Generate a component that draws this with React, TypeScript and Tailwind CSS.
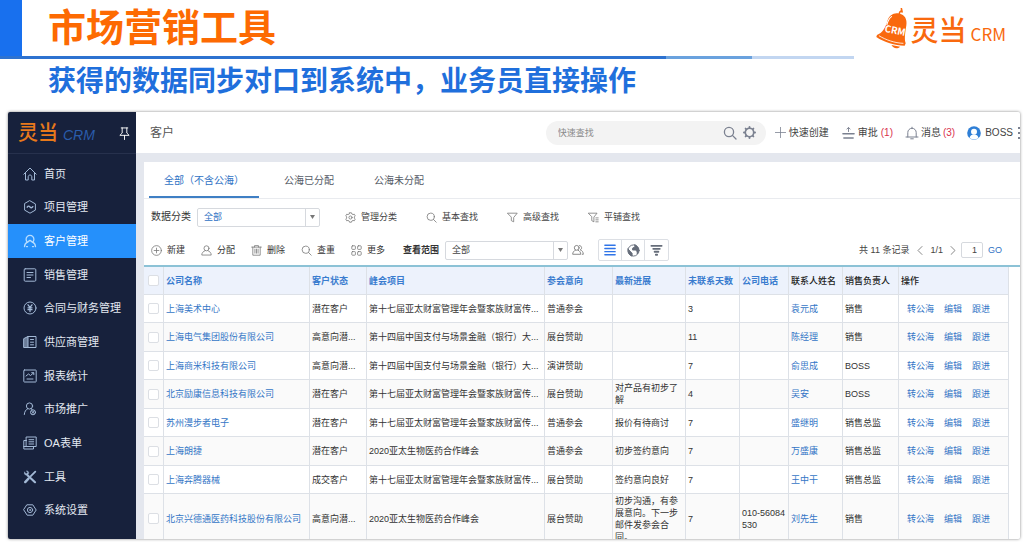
import React from "react";

type IconProps = { className?: string; children: React.ReactNode; box?: string; width?: number };

function Icon({ className = "size-[14px]", children, box = "0 0 14 14", width = 1 }: IconProps) {
  return (
    <svg
      className={`shrink-0 ${className}`}
      viewBox={box}
      fill="none"
      stroke="currentColor"
      strokeWidth={width}
      strokeLinecap="round"
      strokeLinejoin="round"
      aria-hidden="true"
    >
      {children}
    </svg>
  );
}

const hexagon = "M7 .8 12.4 3.9v6.2L7 13.2 1.6 10.1V3.9z";

const searchShape = (
  <>
    <circle cx="6" cy="6" r="4.6" />
    <path d="m9.4 9.4 3.6 3.6" />
  </>
);

const menu: { label: string; icon: React.ReactNode }[] = [
  {
    label: "首页",
    icon: <path d="M.8 7.2 7 1l6.2 6.2M2.500 6v7h2.700V9.800c0-2.400 3.600-2.400 3.600 0V13h2.700V6" />,
  },
  {
    label: "项目管理",
    icon: (
      <>
        <path d={hexagon} />
        <path d="M4.200 7.200c1-1.600 1.900-1.200 2.800-.2s1.800 1.200 2.800-.3" strokeWidth="1.400" />
      </>
    ),
  },
  {
    label: "客户管理",
    icon: (
      <>
        <path d="M4.600 8.400A3.900 3.900 0 1 1 9.400 8.400" strokeWidth="1.300" />
        <path d="M1.500 12.600c.2-2.600 1.300-3.900 3-4.500L7 6.300l2.500 1.800c1.700.6 2.800 1.900 3 4.500M3.500 12.600h1M9.500 12.600h1" strokeWidth="1.300" />
      </>
    ),
  },
  {
    label: "销售管理",
    icon: (
      <>
        <rect x="1.200" y=".8" width="11.600" height="12.400" rx="1" />
        <path d="M4 4.500h6M4 7h6M4 9.500h3.500" />
      </>
    ),
  },
  {
    label: "合同与财务管理",
    icon: (
      <>
        <circle cx="7" cy="7" r="6" />
        <path d="M5 3.800 7 6.400l2-2.600M7 6.400v4.200M5 6.800h4M5 8.700h4" strokeWidth="1.300" />
      </>
    ),
  },
  {
    label: "供应商管理",
    icon: (
      <>
        <path d="M1 3.500 5 1.500v11H1z" fill="currentColor" fillOpacity=".6" />
        <path d="M5 1.500h8v11H5M7.500 4.500h3M7.500 7.200h3M7.500 9.800h3" />
      </>
    ),
  },
  {
    label: "报表统计",
    icon: (
      <>
        <rect x=".8" y="1" width="12.400" height="12" rx=".6" />
        <path d="m3 7 2.500-2 2 1.500L10.500 4M8.700 3.700h2.100v2M4 10h6" />
      </>
    ),
  },
  {
    label: "市场推广",
    icon: (
      <>
        <circle cx="6.500" cy="4" r="3.100" />
        <path d="M4.700 6.700c-2 1-3.200 3-3.400 5.800M8.200 6.600l1.100 1.400" />
        <circle cx="10" cy="10.300" r="2.500" />
        <path d="m8.600 9.200 2.800 2.400M9 11.400l2-2.200" />
      </>
    ),
  },
  {
    label: "OA表单",
    icon: (
      <>
        <path d="M3.500 1h9.700v9.500H3.500zM3.500 4.500H.8V13h9.700v-2.500M.8 10.500h2.700" />
        <path d="M6 3.700h4.700M6 5.800h4.700M6 8h4.700" />
      </>
    ),
  },
  {
    label: "工具",
    icon: (
      <>
        <path d="m4.500 5.200 7.500 7" strokeWidth="2.200" />
        <path
          d="M1.600 2.200 3.200 4 4.800 2.400 3.400 1C5.200.8 6 2.200 5.600 3.600 5.200 5 3.200 5.600 2 4.600 1.300 4 1.200 3 1.600 2.200z"
          fill="currentColor"
          strokeWidth=".5"
        />
        <path d="m12.300 1.700-4.500 4.500" strokeWidth="1.800" />
        <path d="m5.500 8.600-3.300 3.500" strokeWidth="2.400" />
      </>
    ),
  },
  {
    label: "系统设置",
    icon: (
      <>
        <path d="M4.200 1.800h5.600L13.200 7l-3.400 5.200H4.200L.8 7z" />
        <circle cx="7" cy="7" r="2.600" />
        <circle cx="7" cy="7" r=".4" />
      </>
    ),
  },
];

const gearShape = (
  <>
    <path d="M5.800 1h2.400l.5 1.500 1.500.8 1.600-.5 1.200 2.100L11.900 6.200v1.600l1.100 1.300-1.200 2.100-1.600-.5-1.500.8L8.200 13H5.800l-.5-1.500-1.500-.8-1.600.5L1 9.100l1.100-1.300V6.200L1 4.900l1.200-2.100 1.600.5 1.500-.8z" />
    <circle cx="7" cy="7" r="2" />
  </>
);

const finders: { label: string; icon: React.ReactNode }[] = [
  { label: "管理分类", icon: gearShape },
  { label: "基本查找", icon: searchShape },
  { label: "高级查找", icon: <path d="M1 1.500h12L8.500 7v5.500L5.500 11V7z" /> },
  {
    label: "平铺查找",
    icon: <path d="M.8 1.500h10.700L7.500 6.500v6L4.800 11V6.500zM10 7.500h3M10 10h3M10 12.500h3" />,
  },
];

const actions: { label: string; icon: React.ReactNode }[] = [
  {
    label: "新建",
    icon: (
      <>
        <circle cx="7" cy="7" r="6.200" />
        <path d="M7 4v6M4 7h6" />
      </>
    ),
  },
  {
    label: "分配",
    icon: (
      <>
        <circle cx="7" cy="4.200" r="3.200" />
        <path d="M5.300 7.200c-2.500.8-4.300 2.800-4.300 5.600h12c0-2.800-1.800-4.800-4.300-5.600" />
      </>
    ),
  },
  {
    label: "删除",
    icon: <path d="M.8 2.700h12.400M4.500 2.700V.8h5v1.900M2.300 2.700V13h9.400V2.700M5 5.200v5.200M7 5.200v5.200M9 5.200v5.200" />,
  },
  { label: "查重", icon: searchShape },
  {
    label: "更多",
    icon: (
      <>
        <rect x="1" y="1" width="4.600" height="4.600" rx="1" />
        <rect x="8.400" y="1" width="4.600" height="4.600" rx="1" />
        <rect x="1" y="8.400" width="4.600" height="4.600" rx="1" />
        <rect x="8.400" y="8.400" width="4.600" height="4.600" rx="1" />
      </>
    ),
  },
];

const columns: { label: string; width: string; plain?: boolean }[] = [
  { label: "公司名称", width: "w-[146px]" },
  { label: "客户状态", width: "w-[57px]" },
  { label: "峰会项目", width: "w-[178px]" },
  { label: "参会意向", width: "w-[68px]" },
  { label: "最新进展", width: "w-[73px]" },
  { label: "未联系天数", width: "w-[54px]" },
  { label: "公司电话", width: "w-[49px]" },
  { label: "联系人姓名", width: "w-[54px]", plain: true },
  { label: "销售负责人", width: "w-[56px]", plain: true },
  { label: "操作", width: "w-auto", plain: true },
];

type Customer = {
  company: string;
  status: string;
  project: string;
  intent: string;
  progress: string;
  days: string;
  phone: string;
  contact: string;
  owner: string;
};

const wealth = "第十七届亚太财富管理年会暨家族财富传...";
const payment = "第十四届中国支付与场景金融（银行）大...";
const biotech = "2020亚太生物医药合作峰会";

const customers: Customer[] = [
  { company: "上海美术中心", status: "潜在客户", project: wealth, intent: "普通参会", progress: "", days: "3", phone: "", contact: "袁元成", owner: "销售" },
  { company: "上海电气集团股份有限公司", status: "高意向潜...", project: payment, intent: "展台赞助", progress: "", days: "11", phone: "", contact: "陈经理", owner: "销售" },
  { company: "上海商米科技有限公司", status: "高意向潜...", project: payment, intent: "演讲赞助", progress: "", days: "7", phone: "", contact: "俞思成", owner: "BOSS" },
  { company: "北京励康信息科技有限公司", status: "潜在客户", project: wealth, intent: "展台赞助", progress: "对产品有初步了解", days: "4", phone: "", contact: "吴安", owner: "BOSS" },
  { company: "苏州漫步者电子", status: "潜在客户", project: wealth, intent: "普通参会", progress: "报价有待商讨", days: "7", phone: "", contact: "盛继明", owner: "销售总监" },
  { company: "上海朗捷", status: "潜在客户", project: biotech, intent: "普通参会", progress: "初步签约意向", days: "7", phone: "", contact: "万盛康", owner: "销售总监" },
  { company: "上海奔腾器械", status: "成交客户", project: wealth, intent: "展台赞助", progress: "签约意向良好", days: "7", phone: "", contact: "王中干", owner: "销售总监" },
  { company: "北京兴德通医药科技股份有限公司", status: "高意向潜...", project: biotech, intent: "展台赞助", progress: "初步沟通，有参展意向。下一步邮件发参会合同。", days: "7", phone: "010-56084530", contact: "刘先生", owner: "销售" },
];

function BrandLogo() {
  return (
    <div className="flex items-center text-[#f9690e]">
      <svg className="h-[41px] w-[33px]" viewBox="30 24 100 124" aria-hidden="true">
        <path d="M104 44c-1-5 1-9 5-11M110 26l2 10" stroke="#f9690e" strokeWidth="5" fill="none" strokeLinecap="round" />
        <path
          d="M104 41C88 36 73 46 68 62 62 84 52 100 36 106l-2 6c24 16 56 26 86 26l3-7c-5-15-1-35 2-55 3-18-5-33-21-35z"
          fill="#f9690e"
        />
        <path d="M80 50c-8 5-11 14-14 24" stroke="#fff" strokeWidth="3.500" fill="none" strokeLinecap="round" />
        <path d="M42 108c22 13 48 22 74 23" stroke="#fff" strokeWidth="2.500" fill="none" />
        <path d="M80 136c4 10 18 13 26 5z" fill="#f9690e" />
        <text
          x="58"
          y="96"
          transform="rotate(11 58 96)"
          fill="#fff"
          fontSize="29"
          fontWeight="700"
          fontFamily="'Noto Sans CJK SC', sans-serif"
        >
          CRM
        </text>
      </svg>
      <span className="ml-[3px] pt-2 text-[28px] leading-[40px] font-medium">灵当</span>
      <span className="ml-1 pt-3 font-['Noto_Sans_CJK_SC',sans-serif] text-[17px] leading-6">CRM</span>
    </div>
  );
}

function Picker({ id, tone }: { id: string; tone: string }) {
  return (
    <div className="relative h-[19px] w-[123px] shrink-0">
      <select
        id={id}
        className={`block h-full w-full appearance-none rounded-[2px] border border-[#d6d9de] bg-white pl-[6px] text-[9px] leading-[16px] ${tone}`}
      >
        <option>全部</option>
      </select>
      <span className="pointer-events-none absolute inset-y-px right-px flex w-[14px] items-center justify-center border-l border-[#d6d9de]">
        <svg className="h-1 w-[5px]" viewBox="0 0 5 4" aria-hidden="true">
          <path d="M0 0h5L2.500 4z" fill="#777" />
        </svg>
      </span>
    </div>
  );
}

function Check({ label }: { label: string }) {
  return (
    <input
      type="checkbox"
      aria-label={label}
      className="block size-[11px] appearance-none rounded-[2px] border border-[#dcdfe4] bg-white checked:bg-[#2590fb]"
    />
  );
}

function Sidebar() {
  return (
    <aside className="flex w-32 shrink-0 flex-col bg-[#17213c]">
      <div className="flex h-[42px] shrink-0 items-center border-b border-[#27314d] pt-px pr-[5px] pl-[10px]">
        <span className="text-[20px] leading-6 font-medium text-[#e8791b]">灵当</span>
        <span className="ml-[5px] pt-1 text-[14px] leading-5 text-[#2a5cab] italic">CRM</span>
        <button type="button" aria-label="固定菜单" className="ml-auto text-white">
          <Icon className="size-[13px]">
            <path d="M3.500 1h7M4.500 1v5.500L2 9h10L9.500 6.500V1M7 9v4.500" />
          </Icon>
        </button>
      </div>
      <nav className="flex flex-1 flex-col pt-[3px] pb-3">
        {menu.map((item, i) => (
          <a
            key={item.label}
            href="#"
            className={`flex flex-1 items-center gap-[7px] pl-[15px] text-[11px] leading-4 ${
              i === 2 ? "bg-[#2590fb] text-white" : "text-[#e4e9f2]"
            }`}
          >
            <span className={i === 2 ? "text-[#b5dcff]" : "text-[#a3b9d6]"}>
              <Icon>{item.icon}</Icon>
            </span>
            {item.label}
          </a>
        ))}
      </nav>
    </aside>
  );
}

function TopBar() {
  return (
    <div className="flex h-[41px] shrink-0 items-center overflow-hidden bg-white pl-[14px] text-[10px] leading-4 text-[#444]">
      <h3 className="text-[12px] text-[#555]">客户</h3>
      <form className="ml-auto flex h-6 w-[220px] shrink-0 items-center rounded-full bg-[#f3f3f3] pr-[10px] pl-3 text-[#7b8190]">
        <input
          aria-label="快速查找"
          placeholder="快速查找"
          className="min-w-0 flex-1 bg-transparent text-[9px] placeholder:text-[#8a8a8a] focus:outline-none"
        />
        <button type="button" aria-label="查找">
          <Icon width={1.3}>{searchShape}</Icon>
        </button>
        <button type="button" aria-label="查找设置" className="ml-[6px]">
          <Icon className="size-[13px]" width={1.3}>
            <circle cx="7" cy="7" r="4.500" strokeWidth="1.700" />
            <path
              d="M7 1v1M7 12v1M1 7h1M12 7h1M2.800 2.800l.7.7M10.500 10.500l.7.7M11.200 2.800l-.7.7M3.500 10.500l-.7.7"
              strokeWidth="2"
            />
          </Icon>
        </button>
      </form>
      <button type="button" className="ml-[9px] flex shrink-0 items-center gap-[3px]">
        <Icon className="size-[11px] text-[#7b8190]">
          <path d="M7 .5v13M.5 7h13" />
        </Icon>
        快速创建
      </button>
      <button type="button" className="ml-[13px] flex shrink-0 items-center gap-[3px]">
        <Icon className="size-[13px] text-[#7b8190]">
          <path d="M7 6V2M5.300 3.300 7 1.500l1.700 1.800" />
          <path d="M1 8.300h12M2 12.800h10" strokeWidth="1.600" />
        </Icon>
        审批 <span className="text-[#d9304c]">(1)</span>
      </button>
      <button type="button" className="ml-[12px] flex shrink-0 items-center gap-[2px]">
        <Icon className="size-[14px] text-[#7b8190]">
          <path d="M7 1.200v1M2.800 11V6.500a4.200 4.200 0 0 1 8.400 0V11M1 11h12M5.700 12.800h2.600" />
        </Icon>
        消息 <span className="text-[#d9304c]">(3)</span>
      </button>
      <button type="button" className="ml-[12px] flex shrink-0 items-center gap-1">
        <svg className="size-[14px]" viewBox="0 0 14 14" aria-hidden="true">
          <circle cx="7" cy="7" r="6.800" fill="#2f7fd6" />
          <circle cx="7" cy="5.700" r="3" fill="#fff" />
          <path d="M2.500 12c.4-2.600 2.200-3.600 4.500-3.600s4.100 1 4.500 3.600c-2.600 1.900-6.400 1.900-9 0z" fill="#fff" />
        </svg>
        BOSS
      </button>
      <button type="button" aria-label="更多选项" className="ml-1 shrink-0 text-[#7b8190]">
        <svg className="h-3 w-[3px]" viewBox="0 0 3 12" fill="currentColor" aria-hidden="true">
          <path d="M1 0h2v2H1zM1 5h2v2H1zM1 10h2v2H1z" />
        </svg>
      </button>
    </div>
  );
}

function Tabs() {
  const tabs = ["全部（不含公海）", "公海已分配", "公海未分配"];
  return (
    <div role="tablist" className="flex h-[37px] shrink-0 border-b border-[#e9ebef] text-[10px]">
      {tabs.map((tab, i) => (
        <button
          key={tab}
          type="button"
          role="tab"
          aria-selected={i === 0}
          className={`relative px-5 ${i === 0 ? "text-[#2f72c4]" : "text-[#555b66]"}`}
        >
          {tab}
          {i === 0 && <span className="absolute inset-x-[5px] bottom-0 h-[2px] bg-[#3f7fc4]" />}
        </button>
      ))}
    </div>
  );
}

function Toolbars() {
  return (
    <div className="shrink-0 pr-[18px] pl-[7px] text-[9px] leading-4 text-[#333]">
      <div className="flex h-9 items-center">
        <label htmlFor="category" className="mr-[6px] text-[10px]">
          数据分类
        </label>
        <Picker id="category" tone="text-[#2f72c4]" />
        <div className="ml-[25px] flex gap-[29px]">
          {finders.map((f) => (
            <button key={f.label} type="button" className="flex items-center gap-[5px] text-[#444]">
              <Icon className="size-[11px] text-[#777]">{f.icon}</Icon>
              {f.label}
            </button>
          ))}
        </div>
      </div>
      <div className="flex h-[30px] items-center">
        <div className="flex gap-4">
          {actions.map((a) => (
            <button key={a.label} type="button" className="flex items-center gap-[5px]">
              <Icon className="size-[11px] text-[#777]">{a.icon}</Icon>
              {a.label}
            </button>
          ))}
        </div>
        <label htmlFor="scope" className="mr-[6px] ml-[18px] font-bold">
          查看范围
        </label>
        <Picker id="scope" tone="text-[#444]" />
        <button type="button" aria-label="选择人员" className="ml-1 text-[#777]">
          <Icon className="size-[12px]">
            <circle cx="5.500" cy="4.500" r="2.800" />
            <path d="M4 7.200C2 8 .8 9.800.8 12h9.400c0-2.200-1.200-4-3.200-4.800M8.800 1.800c3 .2 3.200 4.200.8 5 2.200.8 3.500 2.500 3.600 5.200H12" />
          </Icon>
        </button>
        <div className="ml-[14px] flex h-[22px] divide-x divide-[#dcdfe4] rounded-[2px] border border-[#dcdfe4]">
          <button type="button" aria-label="列表" className="flex w-[23px] items-center justify-center text-[#2f74e8]">
            <Icon className="size-[12px]" width={1.6}>
              <path d="M1 1.500h12M1 5.200h12M1 8.900h12M1 12.600h12" />
            </Icon>
          </button>
          <button type="button" aria-label="地图" className="flex w-[23px] items-center justify-center text-[#666d7a]">
            <Icon className="size-[13px]">
              <circle cx="7" cy="7" r="6" />
              <path
                d="M1.200 5.500 5.500 10v3C2.500 12.500.8 9.500 1.200 5.500zM8.500 1v2L6 4.500v2h3.500L11 8.500v2.300c2.500-3 2.300-8.300-2.500-9.800z"
                fill="currentColor"
              />
            </Icon>
          </button>
          <button type="button" aria-label="漏斗" className="flex w-[23px] items-center justify-center text-[#666d7a]">
            <Icon className="size-[13px]" width={2}>
              <path d="M1.500 2h11M3.500 5.200h7M5 8.400h4M6.300 11.600h1.400" />
            </Icon>
          </button>
        </div>
        <div className="ml-auto flex items-center text-[#444]">
          <span>共 11 条记录</span>
          <button type="button" aria-label="上一页" className="ml-2 text-[#888]">
            <Icon className="h-[9px] w-[6px]" box="0 0 6 9">
              <path d="M5 .5 1 4.500l4 4" />
            </Icon>
          </button>
          <span className="mx-[7px]">1/1</span>
          <button type="button" aria-label="下一页" className="text-[#888]">
            <Icon className="h-[9px] w-[6px]" box="0 0 6 9">
              <path d="m1 .5 4 4-4 4" />
            </Icon>
          </button>
          <input
            aria-label="页码"
            defaultValue="1"
            className="ml-[5px] h-4 w-[22px] rounded-[2px] border border-[#d6d9de] pr-[5px] text-right"
          />
          <button type="button" className="ml-[5px] text-[#2f72c4]">
            GO
          </button>
        </div>
      </div>
    </div>
  );
}

function CustomerTable() {
  const cell = "border-r border-b border-[#dde1e7] py-0 pr-[2px] pl-[2px]";
  return (
    <div className="min-h-0 flex-1 overflow-hidden border-t-2 border-[#8cc2d6] pr-[11px]">
      <table className="w-full table-fixed border-separate border-spacing-0 text-left text-[9px] leading-3 text-[#333]">
        <thead>
          <tr className="h-[28px] bg-[#edf2fc]">
            <th className="w-5 border-r border-b border-[#dde1e7] py-0 pr-0 pl-1">
              <Check label="全选" />
            </th>
            {columns.map((c) => (
              <th
                key={c.label}
                scope="col"
                className={`${cell} ${c.width} whitespace-nowrap ${c.plain ? "font-medium text-[#222]" : "font-bold text-[#3a7ccf]"}`}
              >
                {c.label}
              </th>
            ))}
          </tr>
        </thead>
        <tbody>
          {customers.map((c) => (
            <tr key={c.company} className="odd:h-[28px] even:h-[29px] even:bg-[#fafafa] last:h-[50px]!">
              <td className="border-r border-b border-[#dde1e7] py-0 pr-0 pl-1">
                <Check label={c.company} />
              </td>
              <td className={cell}>
                <a href="#" className="whitespace-nowrap text-[#3476c6]">
                  {c.company}
                </a>
              </td>
              <td className={`${cell} whitespace-nowrap`}>{c.status}</td>
              <td className={`${cell} whitespace-nowrap`}>{c.project}</td>
              <td className={cell}>{c.intent}</td>
              <td className={cell}>{c.progress}</td>
              <td className={cell}>{c.days}</td>
              <td className={`${cell} break-all`}>{c.phone}</td>
              <td className={cell}>
                <a href="#" className="text-[#3476c6]">
                  {c.contact}
                </a>
              </td>
              <td className={cell}>{c.owner}</td>
              <td className={cell}>
                <div className="flex gap-[10px] pl-[6px] text-[#3476c6]">
                  <a href="#">转公海</a>
                  <a href="#">编辑</a>
                  <a href="#">跟进</a>
                </div>
              </td>
            </tr>
          ))}
        </tbody>
      </table>
    </div>
  );
}

export default function App() {
  return (
    <div className="flex h-screen flex-col overflow-hidden bg-white font-['Liberation_Sans','Noto_Sans_CJK_SC',sans-serif]">
      <header className="shrink-0">
        <div className="flex h-14 items-center pr-[18px]">
          <div className="w-[22px] self-stretch bg-[#1870ee]" />
          <h1 className="ml-[26px] text-[38px] leading-[56px] font-bold text-[#fd6a02]">市场营销工具</h1>
          <div className="ml-auto">
            <BrandLogo />
          </div>
        </div>
        <div className="grid h-[3px] grid-cols-[666fr_86fr_102fr_170fr]">
          <div className="bg-[#2d72d0]" />
          <div className="bg-[#6aa2de]" />
          <div className="bg-[#c2d6f1]" />
        </div>
      </header>
      <h2 className="mb-[7px] shrink-0 pl-12 text-[28px] leading-[46px] font-bold whitespace-nowrap text-[#1f6fdc]">
        获得的数据同步对口到系统中，业务员直接操作
      </h2>
      <main className="mr-1 mb-[10px] ml-2 flex min-h-0 flex-1 overflow-hidden rounded-[2px] bg-[#e4e7ee] shadow-[0_0_3px_#00000080]">
        <Sidebar />
        <section className="flex min-w-0 flex-1 flex-col">
          <TopBar />
          <div className="mt-[9px] ml-2 flex min-h-0 flex-1 flex-col bg-white">
            <Tabs />
            <Toolbars />
            <CustomerTable />
          </div>
        </section>
      </main>
    </div>
  );
}
